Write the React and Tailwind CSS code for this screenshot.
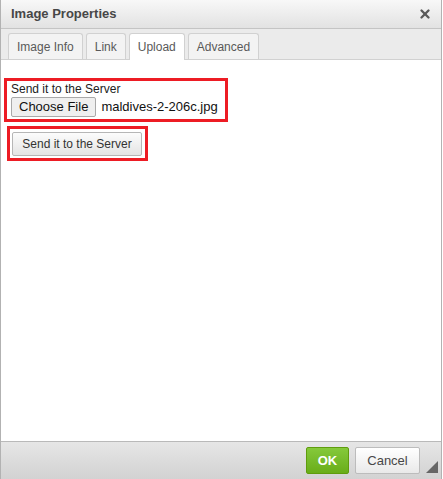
import { X } from 'lucide-react'

const tabs = ['Image Info', 'Link', 'Upload', 'Advanced']

export default function App() {
  return (
    <div className="flex h-[479px] w-[443px] bg-white font-['Liberation_Sans',Arial,sans-serif]">
      <div className="flex h-full w-[442px] flex-col border-x border-[#b2b2b2]">
        {/* title */}
        <div className="flex h-[29px] shrink-0 items-center justify-between border-b border-[#c4c4c4] bg-gradient-to-b from-[#f8f8f8] to-[#e2e2e2] pl-[10px] pr-[9px]">
          <span className="text-[13px] font-bold text-[#474747]">Image Properties</span>
          <X className="h-[14px] w-[14px] text-[#5a5a5a]" strokeWidth={4} />
        </div>

        {/* tabs */}
        <div className="flex h-[31px] shrink-0 items-end gap-[3px] border-b border-[#d1d1d1] bg-[#ebebeb] pl-[7px]">
          {tabs.map((t) => {
            const active = t === 'Upload'
            return (
              <div
                key={t}
                className={
                  active
                    ? 'relative -mb-px flex h-[27px] items-center rounded-t-[3px] border border-b-0 border-[#d1d1d1] bg-white px-[8px] text-[12px] text-[#595959]'
                    : 'flex h-[26px] items-center rounded-t-[3px] border border-b-0 border-[#d1d1d1] bg-[#f3f3f3] px-[8px] text-[12px] text-[#595959]'
                }
              >
                {t}
              </div>
            )
          })}
        </div>

        {/* content */}
        <div className="flex flex-1 flex-col items-start bg-white pl-[3px] pt-[18px]">
          <div className="flex w-[224px] flex-col whitespace-nowrap border-[3px] border-[#ed1c24] pb-[2px] pl-[4px] pt-[1px]">
            <span className="text-[12px] leading-[14px] text-[#222]">Send it to the Server</span>
            <div className="mt-[1px] flex items-center gap-[5px]">
              <button className="h-[20px] shrink-0 whitespace-nowrap rounded-[2px] border border-[#a9a9a9] bg-[#efefef] px-[7px] text-[13px] leading-[18px] text-[#111]">
                Choose File
              </button>
              <span className="whitespace-nowrap text-[13px] text-[#111]">maldives-2-206c.jpg</span>
            </div>
          </div>
          <div className="ml-[3px] mt-[4px] flex h-[35px] w-[141px] items-center border-[3px] border-[#ed1c24] pl-[2px]">
            <button className="h-[24px] w-[130px] whitespace-nowrap rounded-[2px] border border-[#b6b6b6] bg-gradient-to-b from-[#fcfcfc] to-[#e4e4e4] text-[12px] text-[#333]">
              Send it to the Server
            </button>
          </div>
        </div>

        {/* footer */}
        <div className="relative flex h-[38px] shrink-0 items-center justify-end gap-[6px] border-t border-[#b9b9b9] bg-gradient-to-b from-[#e6e6e6] to-[#d2d2d2] pr-[21px]">
          <button className="h-[27px] w-[43px] rounded-[2px] border border-[#5f9c0d] bg-gradient-to-b from-[#85c93a] to-[#69ad18] text-[13px] font-bold text-white">
            OK
          </button>
          <button className="h-[27px] w-[65px] rounded-[2px] border border-[#bcbcbc] bg-gradient-to-b from-[#ffffff] to-[#e9e9e9] text-[13px] text-[#474747]">
            Cancel
          </button>
          <svg className="absolute bottom-[6px] right-[3px]" width="12" height="12" viewBox="0 0 12 12">
            <polygon points="12,0 12,12 0,12" fill="#666" />
          </svg>
        </div>
      </div>
    </div>
  )
}
